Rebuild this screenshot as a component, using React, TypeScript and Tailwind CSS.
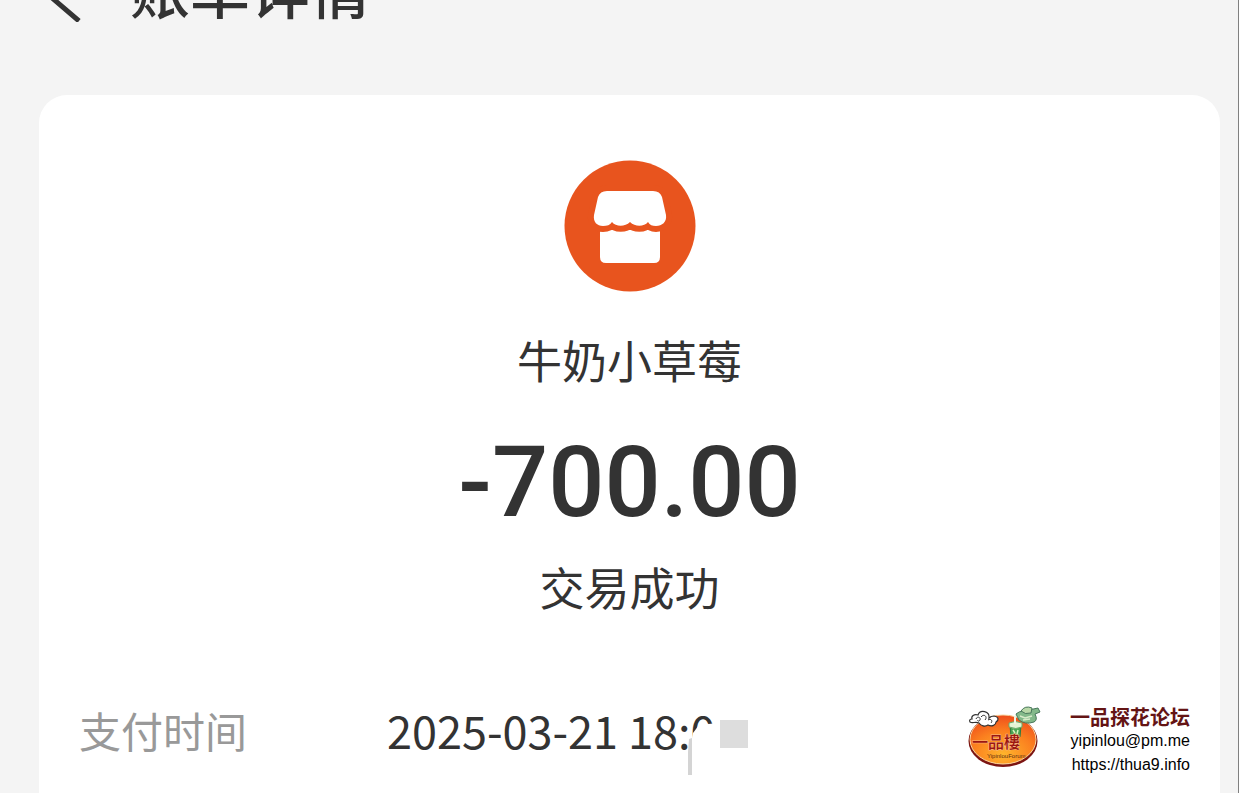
import React from 'react';

const BackIcon: React.FC = () => (
  <svg className="h-16 w-[50px] shrink-0" viewBox="0 0 50 64" fill="none" aria-hidden="true">
    <path d="M39 3 4 33 39 63" stroke="#333" strokeWidth="5" />
  </svg>
);

const ShopIcon: React.FC = () => (
  <svg className="h-[132px] w-[132px]" viewBox="0 0 132 132" aria-hidden="true">
    <circle cx="66" cy="66" r="65.5" fill="#e8541e" />
    <path
      d="M36 70h60v27q0 6-6 6H42q-6 0-6-6z"
      fill="#fff"
    />
    <path
      d="M43 31h46q7 0 9 6l4 18c1 7-4 11-10 11-4 0-6-1-8-4-4 5-13 5-18 0-5 5-14 5-18 0-2 3-5 4-9 4-6 0-10-4-9-11l4-18q2-6 9-6z"
      fill="#fff"
      stroke="#e8541e"
      strokeWidth="12"
      strokeLinejoin="round"
      paintOrder="stroke"
    />
  </svg>
);

const ForumLogo: React.FC = () => (
  <svg className="h-16 w-20 shrink-0" viewBox="0 0 80 64" aria-hidden="true">
    <defs>
      <radialGradient id="disc" cx="50%" cy="80%" r="85%">
        <stop offset="0" stopColor="#ffb52c" />
        <stop offset="0.55" stopColor="#fb7f1f" />
        <stop offset="1" stopColor="#ec451b" />
      </radialGradient>
    </defs>
    <ellipse cx="39" cy="36" rx="34.5" ry="26" fill="#7c1512" />
    <ellipse cx="39" cy="34.5" rx="33" ry="24.5" fill="url(#disc)" stroke="#fbd7a0" strokeWidth="1" />
    <path
      d="M6 17c3 2 5-1 9 1 2 3 6 4 9 2 4 2 8 0 8-3 3-2 3-5-2-6-2 0-4 1-5 2 1-7-9-9-11-3-4-1-7 1-6 4-2 0-3 1-2 3z"
      fill="#fff"
      stroke="#333"
      strokeWidth="1.2"
    />
    <path d="M12 14c1-3 5-2 4 1-1 2-3 1-2 0m3-3c3-4 7 0 4 3m3 0c3-2 5 1 3 3" fill="none" stroke="#333" />
    <path d="M46 20h11l-1 12q-5 3-9 0z" fill="#4aa653" stroke="#2e7941" />
    <path d="M45 18q6-3 13 0v4q-6 3-13 0z" fill="#e4f4d4" stroke="#69a867" />
    <path d="m49 25 2 3m3-3-1 4" stroke="#d9f0be" strokeWidth="1.5" />
    <path d="M54 9 51 12v7" fill="none" stroke="#eef5e5" strokeWidth="2" />
    <path d="M52 9q3-3 8-3l14-3 2 4-5 2q3 6-1 8-9 3-15-2z" fill="#83b98a" stroke="#47775a" />
    <path d="M57 6q4-6 11-3l-1 5q-6 2-10-2z" fill="#b9d8a8" stroke="#47775a" />
    <path d="m56 11 5 2 7-2m-9 4 7-1" fill="none" stroke="#d8ebc9" strokeWidth="1.5" />
    <text
      x="8"
      y="43"
      fontSize="16"
      fill="#9c1611"
      stroke="#f9b98a"
      strokeWidth="1"
      paintOrder="stroke"
      fontWeight="500"
      fontFamily="'Noto Sans CJK TC', sans-serif"
    >
      一品樓
    </text>
    <text x="23" y="53" fontSize="6" fill="#5d2c10" fontFamily="'Liberation Sans', sans-serif">
      YipinlouForum
    </text>
  </svg>
);

const App: React.FC = () => {
  return (
    <div className="relative flex min-h-screen flex-col border-r border-[#808080] bg-[#f4f4f4] font-['Noto_Sans_CJK_SC',sans-serif] text-[#333]">
      <header className="flex h-[95px] items-start overflow-hidden pl-10">
        <div className="-mt-[42px] flex items-start">
          <button type="button" aria-label="返回">
            <BackIcon />
          </button>
          <h1 className="ml-10 text-[60px] leading-[60px] font-medium">账单详情</h1>
        </div>
      </header>

      <main className="mr-[18px] ml-[39px] flex flex-1 flex-col rounded-t-[28px] bg-white px-10 pt-[65px]">
        <section className="flex flex-col items-center">
          <ShopIcon />
          <h2 className="mt-[38px] text-[45px] leading-[60px]">牛奶小草莓</h2>
          <p className="mt-[42px] font-[Roboto,sans-serif] text-[99px] leading-[100px] font-medium">-700.00</p>
          <p className="mt-[25px] text-[45px] leading-[60px]">交易成功</p>
        </section>

        <dl className="mt-[83px] flex leading-[60px]">
          <dt className="w-[308px] shrink-0 text-[42px] text-[#999]">支付时间</dt>
          <dd className="relative text-[45px] whitespace-nowrap">
            2025-03-21 18:0
            {/* smudge over the minutes */}
            <svg className="absolute top-0 right-0 h-20 w-8 overflow-visible" viewBox="0 0 32 80" aria-hidden="true">
              <path d="M9 33 15 25 34 23V60H4z" fill="#fff" />
              <path d="M5 39 8 38V75H4V52z" fill="#d4d4d4" />
            </svg>
          </dd>
          <dd className="mt-5 ml-1 h-7 w-7 bg-[#ddd]" />
        </dl>
      </main>

      <aside className="absolute right-12 bottom-4 flex items-start gap-[26px] text-right">
        <ForumLogo />
        <div className="font-['Liberation_Sans',sans-serif] text-base leading-6 text-black">
          <p className="font-['Noto_Sans_CJK_SC',sans-serif] text-xl leading-6 font-bold text-[#641414]">一品探花论坛</p>
          <a className="block" href="mailto:yipinlou@pm.me">yipinlou@pm.me</a>
          <a className="block" href="https://thua9.info">https://thua9.info</a>
        </div>
      </aside>
    </div>
  );
};

export default App;
